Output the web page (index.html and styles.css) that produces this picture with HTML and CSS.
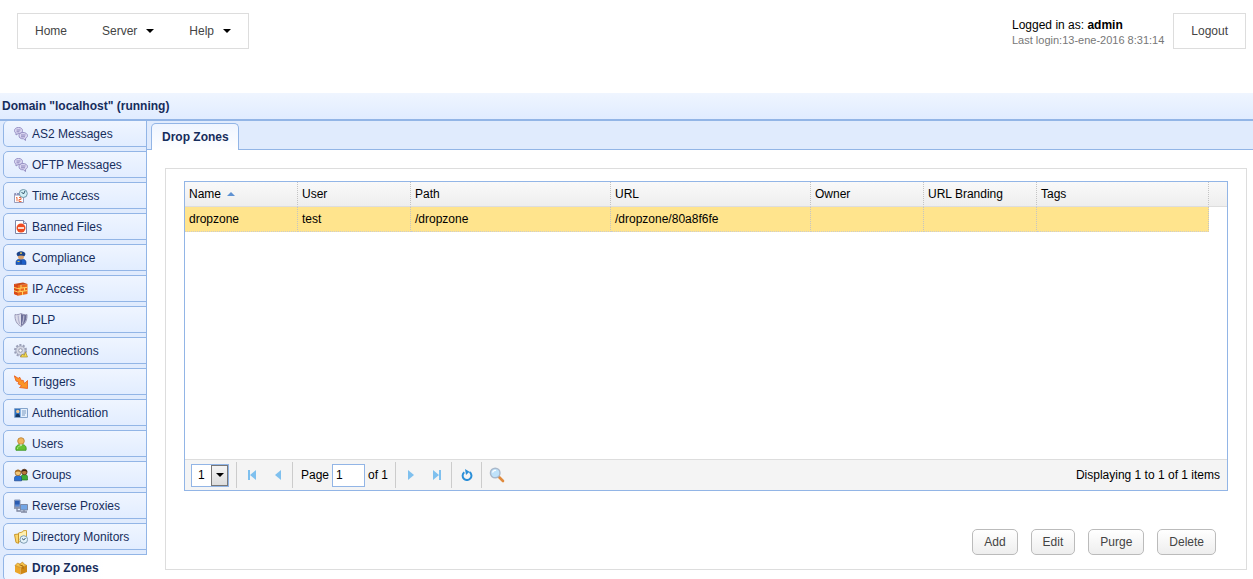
FILE: index.html
```
<!DOCTYPE html>
<html lang="en">
<head>
<meta charset="utf-8">
<title>Drop Zones</title>
<link rel="stylesheet" href="styles.css">
</head>
<body>
<header class="top">
  <nav class="menu">
    <a href="#">Home</a>
    <button type="button">Server <svg class="caret" viewBox="0 0 8 4"><path d="M0 0h8L4 4z"/></svg></button>
    <button type="button">Help <svg class="caret" viewBox="0 0 8 4"><path d="M0 0h8L4 4z"/></svg></button>
  </nav>
  <div class="account">
    <div class="who">
      <div>Logged in as: <b>admin</b></div>
      <div class="last">Last login:13-ene-2016 8:31:14</div>
    </div>
    <button type="button" class="logout">Logout</button>
  </div>
</header>
<h1 class="domain">Domain "localhost" (running)</h1>
<div class="body">
  <nav class="side">
    <a href="#"><svg viewBox="0 0 14 14"><g fill="#dcd8f2" stroke="#9690c4"><path d="M4.500.5C2 .5.500 1.800.5 3.600c0 1.200.6 2 1.500 2.500L2 8l2-1.300c3 .2 4.500-1.200 4.500-3.100S7 .5 4.500.5z"/><path d="M9 5.500c-2.500 0-4 1.300-4 3.200s1.500 3.300 4.500 3.100l2 1.700v-2.200c1.200-.6 2-1.400 2-2.600C13.500 6.800 11.500 5.500 9 5.500z"/></g><path d="M2.500 3h4M2.500 4.800h3M7 8h4.500M7 9.800h4" stroke="#8a83ba" fill="none"/></svg>AS2 Messages</a>
    <a href="#"><svg viewBox="0 0 14 14"><g fill="#dcd8f2" stroke="#9690c4"><path d="M4.500.5C2 .5.500 1.800.5 3.600c0 1.200.6 2 1.500 2.500L2 8l2-1.300c3 .2 4.500-1.200 4.500-3.100S7 .5 4.500.5z"/><path d="M9 5.500c-2.500 0-4 1.300-4 3.200s1.500 3.300 4.500 3.100l2 1.700v-2.200c1.200-.6 2-1.400 2-2.600C13.500 6.800 11.500 5.500 9 5.500z"/></g><path d="M2.500 3h4M2.500 4.800h3M7 8h4.500M7 9.800h4" stroke="#8a83ba" fill="none"/></svg>OFTP Messages</a>
    <a href="#"><svg viewBox="0 0 14 14"><path d="M.5 4.500h9v9h-9z" fill="#fff" stroke="#9a9dbb"/><path d="M1 4h8v2.500H1z" fill="#8d93bd"/><path d="M2.500 3v2.500" stroke="#dfe3f4"/><path d="M2 9l1-.7v4M5 8.500h2v2H5v2h2.500" fill="none" stroke="#ee6a40"/><circle cx="9.300" cy="4.500" r="4" fill="#d0eef5" stroke="#6f97a9"/><path d="M7.500 3l2 2 1.500-3" fill="none" stroke="#2d5268"/></svg>Time Access</a>
    <a href="#"><svg viewBox="0 0 14 14"><path d="M1.500.5h8l3 3v10h-11z" fill="#fff" stroke="#7d86a8"/><path d="M9.500.5v3h3" fill="#dde4f4" stroke="#7d86a8"/><circle cx="7" cy="8" r="4.500" fill="#ee4c22"/><path d="M4 8h6" stroke="#fbd9cc" stroke-width="2"/></svg>Banned Files</a>
    <a href="#"><svg viewBox="0 0 14 14"><path d="M2 13.500V11C2 9 4 8 7 8s5 1 5 3v2.500z" fill="#1d5fc8" stroke="#14418f" stroke-width=".6"/><circle cx="7" cy="5.500" r="3" fill="#dba26c"/><path d="M2.500 3C3 1 5 .2 7 .2S11 1 11.500 3l-1 2.300C8.500 4.300 5.500 4.300 3.500 5.300z" fill="#1c4488"/><path d="M6 2.200h2" stroke="#f4cf50" stroke-width="1.200"/><path d="M3.500 10.500h2" stroke="#e7c03c"/><path d="M7 9v4" stroke="#123a80"/></svg>Compliance</a>
    <a href="#"><svg viewBox="0 0 14 14"><path d="M0 2l3.500 1L13.500 2v10L4 13.800 0 12z" fill="#ec6a1c"/><path d="M0 2L9 .5l4.500 1.500-10 1.300z" fill="#c94a18"/><path d="M3.800 3.300V13.500L0 12V2z" fill="#d9481a"/><path d="M0 5.500l3.800 1 9.700-1.200M0 8.700l3.800 1.300 9.700-1.500M7 3v3M10.500 6v2.700M6 6.500v3M8.500 9.300V13" fill="none" stroke="#ffd763"/></svg>IP Access</a>
    <a href="#"><svg viewBox="0 0 14 14"><path d="M1 1.500C3 2 5 1.500 7 .5c2 1 4 1.500 6 1 .3 5.500-1.500 9.500-6 12-4.500-2.500-6.300-6.500-6-12z" fill="#dcdcea" stroke="#9a9ab8"/><path d="M7 1v12c4-2.300 5.600-6 5.500-11C10.700 2.300 9 2 7 1z" fill="#6c6f98"/><path d="M4.200 2.500c0 3 .3 6 1.500 8.500M9.800 2.500c0 3-.3 6-1.500 8.500" fill="none" stroke="#b4b5d0" stroke-width="1.300"/></svg>DLP</a>
    <a href="#"><svg viewBox="0 0 14 14"><circle cx="6.500" cy="6.500" r="5.500" fill="none" stroke="#9a9fb8" stroke-width="2" stroke-dasharray="2 1.450"/><circle cx="6.500" cy="6.500" r="4.600" fill="#d3d6e3" stroke="#a3a8bd"/><circle cx="6.500" cy="6.500" r="1.800" fill="#fff" stroke="#9499ae"/><path d="M6.500 13l2-3 1.500 1.500L11.500 8l2 5z" fill="#f6dc50" stroke="#a98c28" stroke-width=".7"/></svg>Connections</a>
    <a href="#"><svg viewBox="0 0 14 14"><path d="M.3.8L4.500 3.500 5.500 2l2.200 4L9 5l1.500 3.500L13.500 5.500v8l-8-1 2.200-1.800L4 8.800l.8-1.800L2 6z" fill="#fc9426" stroke="#e85a1c" stroke-width=".8"/></svg>Triggers</a>
    <a href="#"><svg viewBox="0 0 14 14"><path d="M.5 2.500h13v9H.5z" fill="#e4effc" stroke="#85a4cb"/><path d="M1 3h5.500v8H1z" fill="#2f74c4"/><circle cx="3.800" cy="5.500" r="1.700" fill="#f0c58c"/><path d="M1.500 11c0-4.500 4.500-4.500 4.500 0z" fill="#173762"/><path d="M8 5h4M8 7h4M8 9h3" stroke="#7d9cc2"/></svg>Authentication</a>
    <a href="#"><svg viewBox="0 0 14 14"><path d="M2 13.300c-.8-3.800.8-5.800 5-5.800s5.800 2 5 5.800z" fill="#64c234" stroke="#3a9420" stroke-width=".8"/><path d="M3.500 12c0-2 1-3 3-3" fill="none" stroke="#a8e57e"/><circle cx="7" cy="4" r="3.300" fill="#f0b45c" stroke="#b67c2c" stroke-width=".8"/><path d="M5.500 7.500L7 9l1.500-1.500z" fill="#fff"/></svg>Users</a>
    <a href="#"><svg viewBox="0 0 14 14"><path d="M7 12c-.5-4 .5-5.500 3.300-5.500S14 8 13.500 12z" fill="#3fae35" stroke="#1c7520" stroke-width=".7"/><circle cx="10.300" cy="4" r="2.800" fill="#b9793c" stroke="#4a2913" stroke-width=".7"/><path d="M7.500 4c0-3.500 5.500-3.500 5.800 0-2-1.300-4-1.300-5.800 0z" fill="#3d2312"/><path d="M.5 12.800c-.5-4 .8-5.300 3.500-5.300s4 1.300 3.500 5.300z" fill="#2b72d2" stroke="#173f8a" stroke-width=".7"/><circle cx="4" cy="4.800" r="2.900" fill="#f3c878" stroke="#8f602c" stroke-width=".7"/><path d="M1 4.500C1 .8 7 .8 7 4.500 5 3 3 3 1 4.500z" fill="#a66a1f"/></svg>Groups</a>
    <a href="#"><svg viewBox="0 0 14 14"><path d="M.5 1h5.500v7H.5z" fill="#5888d3" stroke="#8c98b4"/><path d="M1 2h4.500v3.500H1z" fill="#2b5cb0"/><path d="M0 9h6M3 9v3h4" fill="none" stroke="#7d87a0" stroke-width="1.300"/><path d="M6.500 5.500h7v5.500h-7z" fill="#71a5e6" stroke="#7d89a4"/><path d="M7 13h6M10 11v2" stroke="#7d87a0" stroke-width="1.300"/></svg>Reverse Proxies</a>
    <a href="#"><svg viewBox="0 0 14 14"><path d="M4.500 3l4-1 .8-1.300L12.500.5V10l-8 2z" fill="#fff0b0" stroke="#cfa33a"/><path d="M.5 4.500L4.500 4v9.300L2 12.500z" fill="#fbd66b" stroke="#c9962a"/><circle cx="9.800" cy="9.500" r="3.800" fill="#e3f2fa" stroke="#7f9db3"/><path d="M8 8.500l1.800 1.500 1.700-2" fill="none" stroke="#35536b"/></svg>Directory Monitors</a>
    <a href="#" class="current"><svg viewBox="0 0 14 14"><path d="M1 4.500l5.500 2v7L1 11z" fill="#eba629"/><path d="M6.500 6.500l6.500-2V11l-6.500 2.500z" fill="#cf8814"/><path d="M1 4.500L3.500 2 6 3l2.500-2 1.500 2 3 1.500-6.500 2z" fill="#f6c34a" stroke="#b97a17" stroke-width=".6"/><path d="M5.500 3.800L9 5v3" fill="none" stroke="#a9690c"/></svg>Drop Zones</a>
  </nav>
  <main class="main">
    <div class="tabs"><a href="#" class="tab">Drop Zones</a></div>
    <section class="panel">
      <div class="grid">
        <div class="rows">
          <table>
            <colgroup><col class="c-s"><col class="c-s"><col class="c-l"><col class="c-l"><col class="c-s"><col class="c-s"><col><col class="c-end"></colgroup>
            <thead><tr><th>Name <svg class="sort" viewBox="0 0 8 4"><path d="M0 4l4-4 4 4z" fill="#5f92d2"/></svg></th><th>User</th><th>Path</th><th>URL</th><th>Owner</th><th>URL Branding</th><th>Tags</th><th class="end"></th></tr></thead>
            <tbody><tr><td>dropzone</td><td>test</td><td>/dropzone</td><td>/dropzone/80a8f6fe</td><td></td><td></td><td></td><td class="end"></td></tr></tbody>
          </table>
        </div>
        <div class="pager">
          <div class="group first">
            <div class="size"><select aria-label="Items per page"><option>1</option></select><span class="drop"><svg class="caret" viewBox="0 0 8 4"><path d="M0 0h8L4 4z"/></svg></span></div>
          </div>
          <div class="group nav">
            <button type="button" aria-label="First page"><svg viewBox="0 0 10 10"><path d="M1 0h2v10H1zM9 0v10L3 5z" fill="#7fc0ee"/></svg></button>
            <button type="button" aria-label="Previous page"><svg viewBox="0 0 10 10"><path d="M8 0v10L2 5z" fill="#7fc0ee"/></svg></button>
          </div>
          <div class="group page"><label for="page">Page</label><input id="page" type="text" value="1"><span>of 1</span></div>
          <div class="group nav">
            <button type="button" aria-label="Next page"><svg viewBox="0 0 10 10"><path d="M2 0v10l6-5z" fill="#7fc0ee"/></svg></button>
            <button type="button" aria-label="Last page"><svg viewBox="0 0 10 10"><path d="M1 0v10l6-5zM7 0h2v10H7z" fill="#7fc0ee"/></svg></button>
          </div>
          <div class="group one"><button type="button" aria-label="Refresh"><svg class="i12" viewBox="0 0 12 12"><path d="M8.500 3A4.400 4.400 0 1 1 3.300 3.200" fill="none" stroke="#2b8fd8" stroke-width="2"/><path d="M4 0l4.500 2.800L5 6z" fill="#2b8fd8"/></svg></button></div>
          <div class="group one"><button type="button" aria-label="Search"><svg class="i16" viewBox="0 0 16 16"><path d="M9.500 9.500l4.500 4.500" stroke="#e08a3c" stroke-width="2.600" stroke-linecap="round"/><circle cx="6.200" cy="6" r="4.800" fill="#bfe2fa" stroke="#a9b8ca" stroke-width="1.400"/><path d="M3.500 5.500c.5-1.500 2-2.500 3.500-2" fill="none" stroke="#fff" stroke-width="1.300"/></svg></button></div>
          <div class="info">Displaying 1 to 1 of 1 items</div>
        </div>
      </div>
      <div class="actions"><button type="button">Add</button><button type="button">Edit</button><button type="button">Purge</button><button type="button">Delete</button></div>
    </section>
  </main>
</div>
</body>
</html>
```
FILE: styles.css
```
* { box-sizing: border-box; }
body {
  margin: 0;
  height: 100vh;
  display: flex;
  flex-direction: column;
  overflow: hidden;
  background: #fff;
  color: #000;
  font: 12px/16px "Liberation Sans", Arial, sans-serif;
}
a { color: inherit; text-decoration: none; }
button, input, select { font: inherit; color: inherit; }
button { margin: 0; padding: 0; border: 0; background: none; }
svg { display: block; flex: none; }
.caret { width: 8px; height: 4px; fill: #000; }

.top {
  display: flex;
  justify-content: space-between;
  align-items: flex-start;
  padding: 13px 7px 0 17px;
  height: 93px;
  flex: none;
}
.menu {
  display: flex;
  align-items: center;
  gap: 35px;
  height: 36px;
  padding: 0 17px;
  border: 1px solid #ddd;
  color: #444;
}
.menu button { display: flex; align-items: center; gap: 9px; }
.account { display: flex; gap: 9px; }
.who { padding-top: 4px; line-height: 16px; }
.last { color: #777; font-size: 11px; line-height: 14px; }
.logout { height: 36px; padding: 0 17px; border: 1px solid #ddd; color: #444; }

.domain {
  margin: 0;
  height: 28px;
  flex: none;
  padding: 0 2px;
  border-bottom: 2px solid #92b5e6;
  background: linear-gradient(#eff5ff, #e0ecff);
  color: #162d5c;
  font-size: 12px;
  line-height: 26px;
}
.body { display: flex; flex: 1; min-height: 0; }

.side {
  display: flex;
  flex-direction: column;
  gap: 4px;
  width: 147px;
  flex: none;
  padding-left: 3px;
  overflow: hidden;
  background: linear-gradient(to left, #92b5e6 1px, #e0ebfd 1px);
  color: #162d5c;
}
.side a {
  display: flex;
  align-items: center;
  gap: 4px;
  height: 27px;
  flex: none;
  padding-left: 10px;
  border: 1px solid #92b5e6;
  border-radius: 5px 0 0 5px;
  background: linear-gradient(#eff5ff, #e2edff);
}
.side a:first-child { height: 26px; border-top: 0; }
.side svg { width: 14px; height: 14px; }
.side .current {
  border-right: 0;
  background: linear-gradient(to right, #eff5ff, #fff 70%);
  font-weight: bold;
}

.main { display: flex; flex-direction: column; flex: 1; min-width: 0; }
.tabs {
  display: flex;
  align-items: flex-end;
  height: 29px;
  flex: none;
  padding-left: 4px;
  border-bottom: 1px solid #92b5e6;
  background: #e0ebfd;
}
.tab {
  height: 27px;
  margin-bottom: -1px;
  padding: 0 9px 0 10px;
  border: 1px solid #92b5e6;
  border-bottom: 0;
  border-radius: 5px 5px 0 0;
  background: linear-gradient(#eff5ff, #fff);
  color: #162d5c;
  font-weight: bold;
  line-height: 26px;
}
.panel {
  display: flex;
  flex-direction: column;
  flex: 1;
  margin: 18px 6px 9px 18px;
  padding: 12px 18px 14px;
  border: 1px solid #ddd;
}
.grid {
  display: flex;
  flex-direction: column;
  flex: 1;
  border: 1px solid #92b5e6;
}
.rows { flex: 1; }
table { width: 100%; table-layout: fixed; border-collapse: separate; border-spacing: 0; }
.c-s { width: 113px; }
.c-l { width: 200px; }
.c-end { width: 18px; }
th, td {
  height: 25px;
  padding: 0 4px;
  border-right: 1px dotted #c4c4c4;
  text-align: left;
  font-weight: normal;
  white-space: nowrap;
}
th { border-bottom: 1px solid #ddd; background: linear-gradient(#f9f9f9, #eee); }
td { border-bottom: 1px dotted #ccc; background: #ffe48d; }
th.end { border-right: 0; }
td.end { border: 0; background: #fff; }
.sort { display: inline-block; width: 8px; height: 4px; margin-left: 3px; vertical-align: 2px; }

.pager {
  display: flex;
  align-items: center;
  height: 31px;
  border-top: 1px solid #ddd;
  background: #f4f4f4;
}
.group { display: flex; align-items: center; height: 26px; border-left: 1px solid #ccc; }
.group button { display: flex; align-items: center; justify-content: center; width: 26px; height: 26px; }
.first { border-left: 0; padding: 0 7px 0 6px; }
.size {
  display: flex;
  width: 38px;
  height: 23px;
  border: 1px solid #92b5e6;
  background: #fff;
}
.size select { flex: 1; min-width: 0; padding: 0 0 0 6px; border: 0; appearance: none; background: none; }
.drop {
  display: flex;
  align-items: center;
  justify-content: center;
  width: 17px;
  border: 1px solid #777;
  background: linear-gradient(#f4f4f4, #ddd);
}
.nav { padding: 0 1px 0 2px; }
.nav svg { width: 10px; height: 10px; }
.page { gap: 3px; padding: 0 7px 0 8px; }
.page input { width: 33px; height: 23px; padding: 0 3px; border: 1px solid #92b5e6; background: #fff; }
.one { padding: 0 1px 0 2px; }
.i12 { width: 12px; height: 12px; }
.i16 { width: 16px; height: 16px; }
.info { margin-left: auto; padding-right: 7px; }

.actions { display: flex; justify-content: flex-end; gap: 13px; padding: 38px 12px 0 0; }
.actions button {
  height: 26px;
  padding: 0 11px;
  border: 1px solid #bbb;
  border-radius: 5px;
  background: linear-gradient(#fff, #eee);
  color: #444;
}
```
